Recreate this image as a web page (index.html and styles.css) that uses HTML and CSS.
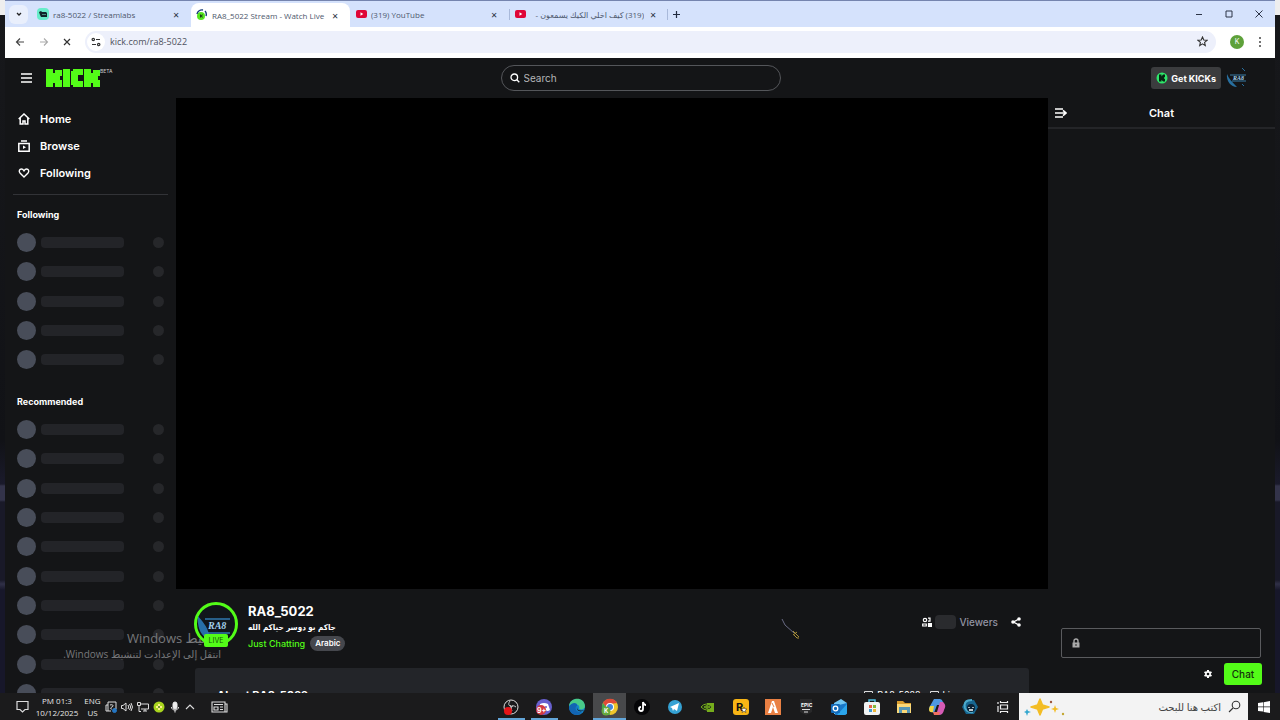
FILE: index.html
```html
<!DOCTYPE html>
<html lang="en">
<head>
    <meta charset="UTF-8">
    <meta name="viewport" content="width=device-width, initial-scale=1.0">
    <title>RA8_5022 Stream - Watch Live</title>
    <link rel="stylesheet" href="styles.css">
</head>
<body>
    <div class="desktop">
        <div class="window">
            <!-- browser tabs -->
            <div class="tabs">
                <button class="tab-menu" aria-label="Search tabs"><svg width="8" height="8" viewBox="0 0 8 8" fill="none" stroke="#222" stroke-width="1.3"><path d="M2 3l2 2 2-2"/></svg></button>
                <div class="tab">
                    <svg width="12" height="12" viewBox="0 0 12 12"><rect width="12" height="12" rx="4" fill="#67edc9"/><path d="M2 4l2-1 1 1h4l1 1v4H4L3 7z" fill="#10282b"/><path d="M6 6v1M8 6v1" stroke="#80f5d2"/></svg>
                    <span class="tab-title">ra8-5022 / Streamlabs</span>
                    <button class="close" aria-label="Close tab">✕</button>
                </div>
                <div class="tab active">
                    <svg width="12" height="12" viewBox="0 0 12 12"><circle cx="5" cy="7" r="4" fill="#55e51f"/><path d="M1 5a5 5 0 0 1 6-4M9 2a5 5 0 0 1 1 5" fill="none" stroke="#173c77" stroke-width="1.4"/><path d="M4 5.500h1v1l1-1h1L6 7l1 1.500H6l-1-1v1H4z" fill="#173d16"/></svg>
                    <span class="tab-title">RA8_5022 Stream - Watch Live</span>
                    <button class="close" aria-label="Close tab">✕</button>
                </div>
                <div class="tab">
                    <svg width="12" height="12" viewBox="0 0 12 12"><rect x="1" y="2" width="11" height="8" rx="2" fill="#df0638"/><path d="M5.500 4.300v3.400L8.300 6z" fill="#fff"/></svg>
                    <span class="tab-title">(319) YouTube</span>
                    <button class="close" aria-label="Close tab">✕</button>
                </div>
                <div class="tab ruled">
                    <svg width="12" height="12" viewBox="0 0 12 12"><rect x="1" y="2" width="11" height="8" rx="2" fill="#df0638"/><path d="M5.500 4.300v3.400L8.300 6z" fill="#fff"/></svg>
                    <span class="tab-title" dir="rtl">(319) كيف اخلي الكيك يسمعون -</span>
                    <button class="close" aria-label="Close tab">✕</button>
                </div>
                <button class="new-tab" aria-label="New tab"><svg width="9" height="9" viewBox="0 0 9 9" stroke="#222b40" stroke-width="1.200"><path d="M4.500 1v7M1 4.500h7"/></svg></button>
                <div class="window-buttons">
                    <button aria-label="Minimize"><svg width="8" height="8" viewBox="0 0 8 8" stroke="#2c3447"><path d="M1 4.500h6"/></svg></button>
                    <button aria-label="Maximize"><svg width="8" height="8" viewBox="0 0 8 8" fill="none" stroke="#2c3447"><path d="M1 1h6v6H1z"/></svg></button>
                    <button aria-label="Close"><svg width="8" height="8" viewBox="0 0 8 8" stroke="#2c3447"><path d="M.5.500l7 7M7.500.500l-7 7"/></svg></button>
                </div>
            </div>

            <!-- address bar -->
            <div class="toolbar">
                <button aria-label="Back"><svg width="10" height="10" viewBox="0 0 10 10" fill="none" stroke="#444" stroke-width="1.200"><path d="M9 5H1.500M5 1.500L1.500 5 5 8.500"/></svg></button>
                <button aria-label="Forward"><svg width="10" height="10" viewBox="0 0 10 10" fill="none" stroke="#aaa" stroke-width="1.100"><path d="M1 5h7.500M5 1.500L8.500 5 5 8.500"/></svg></button>
                <button aria-label="Stop"><svg width="8" height="8" viewBox="0 0 8 8" stroke="#333" stroke-width="1.200"><path d="M1 1l6 6M7 1L1 7"/></svg></button>
                <div class="address">
                    <span class="site-info"><svg width="10" height="10" viewBox="0 0 10 10" fill="none" stroke="#333" stroke-width="1.200"><path d="M5 2.500h4M1 7.500h4"/><circle cx="2.300" cy="2.500" r="1.200"/><circle cx="7.700" cy="7.500" r="1.200"/></svg></span>
                    <input type="text" aria-label="Address" value="kick.com/ra8-5022">
                    <button aria-label="Bookmark"><svg width="11" height="11" viewBox="0 0 11 11" fill="none" stroke="#333" stroke-width="1.100"><path d="M5.500 1l1.300 3 3.200.3-2.400 2.100.7 3.200-2.800-1.700-2.800 1.700.7-3.200L1 4.300 4.200 4z"/></svg></button>
                </div>
                <button class="profile" aria-label="Profile">K</button>
                <button aria-label="Menu"><svg width="4" height="12" viewBox="0 0 4 12" fill="#444"><circle cx="2" cy="2" r="1"/><circle cx="2" cy="6" r="1"/><circle cx="2" cy="10" r="1"/></svg></button>
            </div>

            <header class="site-header">
                <div class="brand">
                    <button aria-label="Toggle sidebar"><svg width="11" height="10" viewBox="0 0 11 10" stroke="#fff" stroke-width="1.300"><path d="M0 1h11M0 5h11M0 9h11"/></svg></button>
                    <a class="logo" href="#" aria-label="Kick">
                        <svg width="54" height="18" viewBox="0 0 54 18" fill="#53fc18"><path d="M0 0h7v4h2V1h7v6h-2v4h2v7H9v-4H7v4H0zM17 0h7v18h-7zM25 2h2V0h10v6h-5v6h5v6H27v-2h-2zM38 0h7v4h2V1h7v6h-2v4h2v7h-7v-4h-2v4h-7z"/></svg>
                        <span>BETA</span>
                    </a>
                </div>
                <label class="search">
                    <svg width="10" height="10" viewBox="0 0 10 10" fill="none" stroke="#fff" stroke-width="1.300"><circle cx="4.300" cy="4.300" r="3.300"/><path d="M6.800 6.800L9.300 9.300"/></svg>
                    <input type="text" aria-label="Search" placeholder="Search">
                </label>
                <div class="account">
                    <button class="kicks"><svg width="12" height="12" viewBox="0 0 12 12"><circle cx="6" cy="6" r="5.500" fill="#2ee66b"/><path d="M3 2.500h2.500v2L7 2.500h2v2.200L7.800 6 9 7.300v2.200H7L5.500 7.700v1.800H3z" fill="#082313"/></svg>Get KICKs</button>
                    <a href="#" aria-label="Account"><svg width="22" height="22" viewBox="0 0 22 22"><path d="M1 7c2 5 5 8 10 13C5 20 0 14 1 7z" fill="#286f9f"/><path d="M4 8h16M6 14h14" stroke="#397da7"/><path d="M16 1l3 3M16 17l2 2" stroke="#286f9f"/><text class="mark" x="7" y="13" font-size="6">RA8</text></svg></a>
                </div>
            </header>

            <div class="site">
                <nav class="sidebar">
                    <ul class="menu">
                        <li><a href="#"><svg width="12" height="12" viewBox="0 0 12 12" fill="none" stroke="#fff" stroke-width="1.500"><path d="M.7 6L6 1l5.300 5M2.200 5v6H5V8h2v3h2.800V5"/></svg>Home</a></li>
                        <li><a href="#"><svg width="12" height="12" viewBox="0 0 12 12" fill="none" stroke="#fff" stroke-width="1.500"><path d="M3 1h6M.8 3.500h10.400v7.700H.8z"/><path d="M5 5.500v3.500l3-1.700z" fill="#fff" stroke="none"/></svg>Browse</a></li>
                        <li><a href="#"><svg width="12" height="12" viewBox="0 0 12 12" fill="none" stroke="#fff" stroke-width="1.400"><path d="M6 10L2 6C.5 4.300 1.500 2 3.400 2 4.800 2 5.500 3 6 3.800 6.500 3 7.200 2 8.600 2c1.900 0 2.900 2.300 1.400 4z"/></svg>Following</a></li>
                    </ul>
                    <h2>Following</h2>
                    <div class="channels short">
                        <div class="channel"><i></i><b></b><s></s></div>
                        <div class="channel"><i></i><b></b><s></s></div>
                        <div class="channel"><i></i><b></b><s></s></div>
                        <div class="channel"><i></i><b></b><s></s></div>
                        <div class="channel"><i></i><b></b><s></s></div>
                    </div>
                    <h2>Recommended</h2>
                    <div class="channels">
                        <div class="channel"><i></i><b></b><s></s></div>
                        <div class="channel"><i></i><b></b><s></s></div>
                        <div class="channel"><i></i><b></b><s></s></div>
                        <div class="channel"><i></i><b></b><s></s></div>
                        <div class="channel"><i></i><b></b><s></s></div>
                        <div class="channel"><i></i><b></b><s></s></div>
                        <div class="channel"><i></i><b></b><s></s></div>
                        <div class="channel"><i></i><b></b><s></s></div>
                        <div class="channel"><i></i><b></b><s></s></div>
                        <div class="channel"><i></i><b></b><s></s></div>
                    </div>
                </nav>

                <main class="stream">
                    <div class="player"></div>
                    <div class="info">
                        <div class="avatar">
                            <svg width="44" height="44" viewBox="0 0 44 44"><circle cx="22" cy="22" r="20.500" fill="#11161b" stroke="#53fc18" stroke-width="3"/><path d="M4 14c4 5 9 10 11 18l-3 4C6 32 3 24 4 14z" fill="#286fa8"/><path d="M11 17h25M13 31h23" stroke="#2f78ae" stroke-width="1.500"/><text class="mark" x="14" y="27" font-size="10">RA8</text></svg>
                            <span class="live">LIVE</span>
                        </div>
                        <div class="details">
                            <h1>RA8_5022</h1>
                            <p class="stream-title" dir="rtl">جاكم بو دوسر حياكم الله</p>
                            <div class="tags"><a href="#">Just Chatting</a><span class="tag">Arabic</span></div>
                        </div>
                        <div class="viewers">
                            <svg width="10" height="10" viewBox="0 0 10 10" fill="none" stroke="#fff" stroke-width="1.200"><circle cx="3" cy="3" r="1.700"/><path d="M.7 9V7h3.600v2zM6 1.200h2v3H6"/><path d="M6.500 6.500h3v3h-3z" fill="#fff"/></svg>
                            <span class="count"></span>
                            <span>Viewers</span>
                            <button aria-label="Share"><svg width="10" height="10" viewBox="0 0 10 10" fill="none" stroke="#fff" stroke-width="1.200"><path d="M8 2L2.500 5 8 8"/><g fill="#fff" stroke="none"><circle cx="8" cy="2" r="1.800"/><circle cx="2" cy="5" r="1.800"/><circle cx="8" cy="8" r="1.800"/></g></svg></button>
                        </div>
                    </div>
                    <section class="about">
                        <h2>About RA8_5022 <small>✓</small></h2>
                        <div class="links">
                            <svg width="9" height="9" viewBox="0 0 9 9" fill="none" stroke="#ddd"><path d="M.5.500h8v8h-8z"/></svg><span>RA8_5022</span>
                            <svg width="9" height="9" viewBox="0 0 9 9" fill="none" stroke="#ddd"><path d="M.5.500h8v8h-8z"/></svg><span>Live</span>
                        </div>
                    </section>
                </main>

                <aside class="chat">
                    <div class="chat-header">
                        <button aria-label="Collapse chat"><svg width="12" height="10" viewBox="0 0 12 10" fill="none" stroke="#fff" stroke-width="1.600"><path d="M0 1h8M0 5h10M0 9h8M8 2.300L11 5 8 7.700"/></svg></button>
                        <h2>Chat</h2>
                    </div>
                    <label class="message">
                        <svg width="8" height="10" viewBox="0 0 8 10"><path d="M2 5V3a2 2 0 0 1 4 0v2" fill="none" stroke="#aaa" stroke-width="1.400"/><path d="M.5 4.500h7v5h-7z" fill="#aaa"/><path d="M4 6v2" stroke="#222"/></svg>
                        <input type="text" aria-label="Message">
                    </label>
                    <div class="chat-actions">
                        <button aria-label="Chat settings"><svg width="10" height="10" viewBox="0 0 10 10"><path d="M5 1v8M1.500 3l7 4M8.500 3l-7 4" stroke="#fff" stroke-width="2"/><circle cx="5" cy="5" r="2.900" fill="#fff"/><circle cx="5" cy="5" r="1.300" fill="#141517"/></svg></button>
                        <button class="send">Chat</button>
                    </div>
                </aside>
            </div>
        </div>

        <!-- windows activation notice -->
        <div class="watermark" dir="rtl"><strong>تنشيط Windows</strong><span>انتقل إلى الإعدادت لتنشيط Windows.</span></div>
        <svg class="cursor" width="20" height="22" viewBox="0 0 20 22" fill="none"><path d="M1 1l3 6 9 8" stroke="#686a83"/><path d="M12 13l6 6M12 17l4-3M13 17l3 3h2" stroke="#a88f38"/></svg>

        <footer class="taskbar">
            <div class="tray">
                <svg class="notify" width="13" height="13" viewBox="0 0 13 13" fill="none" stroke="#ddd" stroke-width="1.200"><path d="M1 1.500h11v8H9L6.500 12 4 9.500H1z"/></svg>
                <div class="clock"><span>PM 01:3</span><span>10/12/2025</span></div>
                <div class="lang"><span>ENG</span><span>US</span></div>
                <svg width="12" height="12" viewBox="0 0 12 12" fill="none" stroke="#ddd"><path d="M3 10H1V4h2M9 8h2V1H3v9h3M5 4c3-1 4 1 2 2s-2 2 0 2"/><circle cx="9.500" cy="9.500" r="2" fill="#2476c2" stroke="#2476c2"/></svg>
                <svg width="12" height="12" viewBox="0 0 12 12" fill="none" stroke="#ddd"><path d="M.5 4.500H2L5 2v8L2 7.500H.5zM7 4q1.500 2 0 4M8.500 3q2.500 3 0 6M10 2q3 4 0 8"/></svg>
                <svg width="12" height="12" viewBox="0 0 12 12" fill="none" stroke="#ddd"><path d="M4 3h7.500v5H4M6 10h4M8 8v2M.5 1.500h3v3h-3zM2 4.500v6h2"/></svg>
                <svg width="12" height="12" viewBox="0 0 12 12"><circle cx="6" cy="6" r="5.500" fill="#a9d51e"/><path d="M6 3v6M3 6h6" stroke="#fff08a" stroke-width="2"/><circle cx="6" cy="6" r="1" fill="#3c781b"/></svg>
                <svg width="12" height="12" viewBox="0 0 12 12" fill="none" stroke="#eee"><rect x="4" y="1" width="4" height="7" rx="2" fill="#eee"/><path d="M2.500 6c0 4 7 4 7 0M6 9v2.500"/></svg>
                <svg class="chevron" width="10" height="10" viewBox="0 0 10 10" fill="none" stroke="#ddd" stroke-width="1.100"><path d="M1 7l4-4 4 4"/></svg>
                <svg class="news" width="17" height="12" viewBox="0 0 17 12" fill="none" stroke="#ddd" stroke-width="1.100"><path d="M1 1h13v10H1zM14 3h2v8h-2M3 3.500h9M9 6h3M9 8.500h3M3 6h4v3H3z"/></svg>
            </div>
            <div class="apps">
                <a class="open" href="#" aria-label="OBS"><svg width="18" height="18" viewBox="0 0 18 18"><circle cx="9" cy="9" r="7" fill="#18191b" stroke="#ddd"/><path d="M8 3c-3 4 0 6 3 5M14 9c-4-3-6 0-4 4M5 13c4 0 5-3 3-6" fill="none" stroke="#ccc"/><circle cx="6" cy="13" r="4" fill="#e51418"/></svg></a>
                <a class="open" href="#" aria-label="Discord"><svg width="18" height="18" viewBox="0 0 18 18"><circle cx="9" cy="9" r="8" fill="#6860ce"/><path d="M5 6q4-2 8 0l2 6q-3 2-4 0H8q-2 2-4 0z" fill="#fff"/><circle cx="11" cy="9" r="1" fill="#6860ce"/><circle cx="6" cy="12" r="5" fill="#d33941"/><text class="badge" x="2" y="15" font-size="7">9+</text></svg></a>
                <a href="#" aria-label="Edge"><svg width="18" height="18" viewBox="0 0 18 18"><circle cx="9" cy="9" r="8" fill="#1586cc"/><path d="M1 8C2-1 16-2 17 8c0 3-3 4-6 3 2-4-4-7-10-3z" fill="#48ca89"/><path d="M1 9c2-5 9-5 8-1-3 2-1 7 5 6-5 6-13 2-13-5z" fill="#1264b3"/><path d="M9 9c0 4 4 4 7 3-3 3-8 1-7-3z" fill="#16202a"/></svg></a>
                <a class="open current" href="#" aria-label="Chrome"><svg width="18" height="18" viewBox="0 0 18 18"><circle cx="9" cy="9" r="8" fill="#efc52b"/><path d="M2 5a8 8 0 0 1 14 0l-7 1-3 5z" fill="#df4939"/><path d="M2 5l5 7 2 5C2 17-1 10 2 5z" fill="#3fa652"/><circle cx="9" cy="9" r="4" fill="#fff"/><circle cx="9" cy="9" r="3" fill="#4285de"/><circle cx="5" cy="13" r="4.500" fill="#65aa3d"/><text class="badge" x="3" y="15" font-size="6">K</text></svg></a>
                <a href="#" aria-label="TikTok"><svg width="18" height="18" viewBox="0 0 18 18"><circle cx="9" cy="9" r="8" fill="#050507"/><path d="M10 4v7a2 2 0 1 1-2-2M10 4q1 3 3 3" fill="none" stroke="#fff" stroke-width="1.800"/></svg></a>
                <a href="#" aria-label="Telegram"><svg width="18" height="18" viewBox="0 0 18 18"><circle cx="9" cy="9" r="7" fill="#35a2d4"/><path d="M4 9l9-4-2 8-3-2-1 2-1-3z" fill="#fff"/></svg></a>
                <a href="#" aria-label="NVIDIA"><svg width="18" height="18" viewBox="0 0 18 18"><path d="M8 5h7v9H8z" fill="#76ad1c"/><path d="M2 9q5-6 11 0-5 6-11 0zM5 9q3-3 6 0-3 3-6 0z" fill="#1d2718" stroke="#76ad1c"/><circle cx="8" cy="9" r="1" fill="#76ad1c"/></svg></a>
                <a href="#" aria-label="Rockstar"><svg width="18" height="18" viewBox="0 0 18 18"><rect x="1" y="1" width="16" height="16" rx="3" fill="#f8b515"/><text class="rockstar" x="4" y="13" font-size="11">R</text><path d="M12 9l.8 2h2.200l-1.700 1.500.7 2-2-1.200-2 1.200.7-2L9 11h2.200z" fill="#fff" stroke="#222" stroke-width=".5"/></svg></a>
                <a href="#" aria-label="FiveM"><svg width="18" height="18" viewBox="0 0 18 18"><path d="M1 1h16v16H1z" fill="#e98043"/><path d="M4 15L8 3h2l4 12h-3L9 9l-2 6z" fill="#fff"/><path d="M8 5l2 4" stroke="#e98043"/></svg></a>
                <a href="#" aria-label="Epic Games"><svg width="18" height="18" viewBox="0 0 18 18"><path d="M3 1h12v13l-6 3-6-3z" fill="#29292a"/><text class="badge" x="4" y="9" font-size="5">EPIC</text><path d="M5 11.500h8M7 14h4" stroke="#ddd"/></svg></a>
                <a href="#" aria-label="Outlook"><svg width="18" height="18" viewBox="0 0 18 18"><path d="M4 5l7-4 6 4v11H4z" fill="#71c7f3"/><path d="M5 8l12-3v9q0 3-3 3H5z" fill="#1978c9"/><path d="M17 6v8q0 3-3 3H7z" fill="#2ba6ec"/><rect x="1" y="6" width="9" height="9" rx="1" fill="#126bb9"/><circle cx="5.500" cy="10.500" r="2.300" fill="none" stroke="#fff" stroke-width="1.300"/></svg></a>
                <a href="#" aria-label="Store"><svg width="18" height="18" viewBox="0 0 18 18"><path d="M6 5V2h6v3" fill="none" stroke="#4fbfe1" stroke-width="1.500"/><rect x="1" y="4" width="16" height="13" rx="2" fill="#f1f3f3"/><path d="M6 7h3v3H6z" fill="#e36149"/><path d="M10 7h3v3h-3z" fill="#81b93c"/><path d="M6 11h3v3H6z" fill="#409bd1"/><path d="M10 11h3v3h-3z" fill="#edb638"/></svg></a>
                <a href="#" aria-label="File Explorer"><svg width="18" height="18" viewBox="0 0 18 18"><path d="M2 3h6l2 2h6v10H2z" fill="#d99d2e"/><path d="M2 6h14v9H2z" fill="#fbd878"/><path d="M4 9h11v6h-3v-3H7v3H4z" fill="#5696b5"/></svg></a>
                <a href="#" aria-label="Copilot"><svg width="18" height="18" viewBox="0 0 18 18"><path d="M6 1h6q2 0 3 3l1 3H9L6 15 2 13Q0 11 2 8z" fill="#4f98e3"/><path d="M6 8H2l-1 3q0 4 4 3z" fill="#f0d445"/><path d="M12 4h3q4 3 1 8-1 5-5 5H6q2 0 3-3z" fill="#d65bb5"/><path d="M5 14h7l-1 3H6z" fill="#ef7060"/></svg></a>
                <a href="#" aria-label="Voice app"><svg width="18" height="18" viewBox="0 0 18 18"><path d="M5 2h8l4 7-4 7H5L1 9z" fill="#176690"/><path d="M11 2Q2 2 4 10q2 5 8 4" fill="none" stroke="#4ba9ca" stroke-width="2"/><circle cx="10" cy="10" r="4" fill="#0b2437"/><path d="M8 9v1M12 9v1M8 12h4" stroke="#fff" stroke-width="1.300"/></svg></a>
                <a href="#" aria-label="Task view"><svg width="14" height="14" viewBox="0 0 14 14" fill="none" stroke="#eee" stroke-width="1.200"><path d="M4.500 5h7v4h-7zM4 2.500h8M4 11.500h8M2 2v2M2 6v6M4.500 1v2M11.500 1v2M4.500 11v2M11.500 11v2"/></svg></a>
            </div>
            <label class="task-search" dir="rtl">
                <svg width="13" height="13" viewBox="0 0 13 13" fill="none" stroke="#333" stroke-width="1.100"><circle cx="8" cy="5" r="3.800"/><path d="M5 8l-4 4"/></svg>
                <input type="text" aria-label="بحث" placeholder="اكتب هنا للبحث">
                <svg width="42" height="20" viewBox="0 0 42 20"><path d="M17 2l2.500 6L26 10l-6.500 2L17 18l-2.500-6L8 10l6.500-2z" fill="#f3bd25" stroke="#f3bd25" stroke-width="1.500" stroke-linejoin="round"/><path d="M32 8l1 3 3 1-3 1-1 3-1-3-3-1 3-1z" fill="#f3bd25"/><path d="M4 12l1 2 3 1-3 1-1 3-1-3-2-1 2-1z" fill="#35a8cf"/><circle cx="28" cy="5" r="1.200" fill="#9d563c"/><circle cx="40" cy="17" r="1.200" fill="#c3a732"/></svg>
            </label>
            <button class="start" aria-label="Start"><svg width="12" height="12" viewBox="0 0 12 12" fill="#fff"><path d="M0 2l5-.7v4.300H0zM5.600 1.200L12 0v5.600H5.600zM0 6.200h5v4.300L0 10zM5.600 6.200H12V12l-6.400-1.100z"/></svg></button>
        </footer>
    </div>
</body>
</html>
```

FILE: styles.css
```css
* {
    box-sizing: border-box;
}
body {
    margin: 0;
    font-family: Inter, "DejaVu Sans", sans-serif;
    font-size: 11px;
    color: #fff;
    background-color: #131417;
}
button {
    padding: 0;
    border: 0;
    background: none;
    color: inherit;
    font: inherit;
    display: flex;
    align-items: center;
    justify-content: center;
}
input {
    min-width: 0;
    flex: 1;
    padding: 0;
    border: 0;
    outline: 0;
    background: none;
    color: inherit;
    font: inherit;
}
a {
    color: inherit;
    text-decoration: none;
}
h1, h2, p, ul {
    margin: 0;
    padding: 0;
}
svg {
    flex: none;
    display: block;
}
.desktop {
    position: relative;
    height: 100vh;
    display: flex;
    flex-direction: column;
    overflow: hidden;
    background: linear-gradient(#eee 15px, #17181b 15px, #111216 440px, #1a1a2b 484px, #33334a 486px, #33334a 500px, #191928 502px, #191928 580px, #303047 584px, #17172a 590px);
}
.window {
    flex: 1;
    min-height: 0;
    margin: 0 5px;
    display: flex;
    flex-direction: column;
    background-color: #141517;
}

/* browser */
.tabs {
    height: 27px;
    flex: none;
    display: flex;
    align-items: center;
    border-top: 1px solid #7584ae;
    background-color: #d5e2fc;
    color: #4d586c;
    font-family: "Open Sans", "DejaVu Sans", sans-serif;
    font-size: 8px;
}
.tab-menu {
    width: 19px;
    height: 19px;
    margin: 0 4px;
    border-radius: 6px;
    background-color: #e9effc;
}
.tab {
    width: 159px;
    height: 100%;
    padding: 0 10px 0 5px;
    display: flex;
    align-items: center;
    gap: 4px;
}
.tab.active {
    height: 24px;
    align-self: flex-end;
    border-radius: 8px 8px 0 0;
    background-color: #fff;
}
.tab.ruled {
    background: linear-gradient(#a9b9da, #a9b9da) no-repeat left center / 1px 11px, linear-gradient(#a9b9da, #a9b9da) no-repeat right center / 1px 11px;
}
.tab-title {
    flex: 1;
    overflow: hidden;
    white-space: nowrap;
}
.close {
    width: 10px;
    color: #2c3447;
}
.new-tab {
    width: 16px;
}
.window-buttons {
    margin-left: auto;
    padding-right: 12px;
    display: flex;
    gap: 22px;
}
.toolbar {
    height: 31px;
    flex: none;
    display: flex;
    align-items: center;
    gap: 14px;
    padding: 0 13px 2px 10px;
    background-color: #fff;
}
.address {
    flex: 1;
    height: 22px;
    padding: 0 8px 0 2px;
    display: flex;
    align-items: center;
    gap: 5px;
    border-radius: 11px;
    background-color: #edf0fb;
    color: #4f5360;
    font-family: "Open Sans", sans-serif;
    font-size: 9px;
}
.site-info {
    width: 18px;
    height: 18px;
    display: flex;
    align-items: center;
    justify-content: center;
    border-radius: 9px;
    background-color: #fff;
}
.profile {
    width: 14px;
    height: 14px;
    border-radius: 7px;
    background-color: #5ea13a;
    font-size: 7px;
}

/* kick header */
.site-header {
    height: 40px;
    flex: none;
    display: grid;
    grid-template-columns: 1fr 280px 1fr;
    align-items: center;
    padding: 0 27px 0 16px;
}
.brand, .logo, .account {
    display: flex;
    align-items: center;
}
.brand {
    gap: 14px;
}
.logo {
    align-items: flex-start;
    color: #ccc;
    font-size: 5px;
    line-height: 5px;
}
.search {
    height: 26px;
    display: flex;
    align-items: center;
    gap: 4px;
    margin-left: 6px;
    width: 280px;
    padding: 0 8px;
    border: 1px solid #54565a;
    border-radius: 13px;
    font-size: 10px;
}
.search input::placeholder {
    color: #b5b6b9;
    opacity: 1;
}
.account {
    justify-content: flex-end;
    gap: 5px;
}
.kicks {
    height: 22px;
    padding: 0 5px;
    gap: 3px;
    border-radius: 3px;
    background-color: #3b3c3e;
    font-size: 9px;
    font-weight: 700;
}
.mark {
    fill: #a3d0ed;
    font-family: "Liberation Serif", serif;
    font-style: italic;
    font-weight: bold;
}

/* page columns */
.site {
    flex: 1;
    min-height: 0;
    display: grid;
    grid-template-columns: 171px 1fr 227px;
    grid-template-rows: 100%;
}
.sidebar {
    padding: 7px 8px 0 12px;
    overflow: hidden;
}
.menu {
    list-style: none;
    padding-bottom: 8px;
    margin-left: -4px;
    border-bottom: 1px solid #323337;
}
.menu a {
    height: 27px;
    padding-left: 5px;
    display: flex;
    align-items: center;
    gap: 10px;
    font-weight: 600;
}
.sidebar h2 {
    margin: 13px 0 11px;
    font-size: 9px;
    line-height: 14px;
    font-weight: 700;
}
.channels {
    height: 283px;
    display: flex;
    flex-direction: column;
    justify-content: space-between;
    padding-right: 4px;
}
.channels.short {
    height: 136px;
    margin-bottom: 26px;
}
.channel {
    display: flex;
    align-items: center;
}
.channel i {
    width: 19px;
    height: 19px;
    border-radius: 50%;
    background-color: #484d59;
}
.channel b {
    width: 83px;
    height: 11px;
    margin-left: 5px;
    border-radius: 4px;
    background-color: #232428;
}
.channel s {
    width: 11px;
    height: 11px;
    margin-left: auto;
    border-radius: 50%;
    background-color: #26272a;
}
.stream {
    min-height: 0;
    display: flex;
    flex-direction: column;
    overflow: hidden;
}
.player {
    flex: 1;
    background-color: #000;
}
.info {
    height: 79px;
    flex: none;
    display: flex;
    padding: 13px 27px 0 18px;
    gap: 10px;
}
.avatar {
    position: relative;
    z-index: 2;
    height: 44px;
}
.live {
    position: absolute;
    left: 10px;
    bottom: -1px;
    width: 24px;
    height: 13px;
    border-radius: 2px;
    background-color: #53fc18;
    color: #16540b;
    font-size: 7px;
    line-height: 13px;
    text-align: center;
}
.details {
    flex: 1;
}
.details h1 {
    font-size: 13px;
    line-height: 18px;
    font-weight: 700;
}
.stream-title {
    width: fit-content;
    font-family: "DejaVu Sans Condensed", "DejaVu Sans", sans-serif;
    font-size: 8px;
    font-weight: bold;
    line-height: 16px;
}
.tags {
    display: flex;
    align-items: center;
    gap: 5px;
    color: #53fc18;
    font-size: 9px;
    font-weight: 500;
}
.tag {
    padding: 0 5px;
    border-radius: 8px;
    background-color: #45474d;
    color: #fff;
    font-size: 8px;
    line-height: 15px;
    font-weight: 600;
}
.viewers {
    height: 14px;
    margin-top: 13px;
    display: flex;
    align-items: center;
    gap: 3px;
    color: #9293a2;
    font-size: 10px;
    font-weight: 500;
}
.viewers button {
    margin-left: 10px;
}
.count {
    width: 21px;
    height: 14px;
    border-radius: 4px;
    background-color: #2a2b2e;
}
.about {
    height: 25px;
    flex: none;
    margin: 0 19px;
    padding: 20px 19px 0 22px;
    display: flex;
    justify-content: space-between;
    overflow: hidden;
    border-radius: 3px 3px 0 0;
    background-color: #232529;
}
.about h2 {
    font-size: 11px;
    line-height: 14px;
    font-weight: 700;
}
.about small {
    font-size: 8px;
}
.links {
    display: flex;
    gap: 4px;
    padding-right: 50px;
    font-size: 9px;
    line-height: 13px;
}
.links svg {
    margin: 3px 0 0 5px;
}

/* chat */
.chat {
    display: flex;
    flex-direction: column;
}
.chat-header {
    height: 31px;
    display: grid;
    grid-template-columns: 1fr auto 1fr;
    align-items: center;
    padding: 0 7px;
    border-bottom: 2px solid #242528;
}
.chat-header button {
    justify-content: flex-start;
}
.chat-header h2 {
    font-size: 11px;
    font-weight: 600;
}
.message {
    height: 30px;
    margin: auto 14px 5px 13px;
    padding: 0 10px;
    display: flex;
    align-items: center;
    gap: 8px;
    border: 1px solid #5a5b5e;
    border-radius: 2px;
}
.chat-actions {
    display: flex;
    justify-content: flex-end;
    gap: 11px;
    padding: 0 13px 8px 0;
}
.send {
    width: 38px;
    height: 22px;
    border-radius: 3px;
    background-color: #53fc18;
    color: #14310c;
    font-size: 10px;
    font-weight: 500;
}

/* over the desktop */
.watermark {
    position: absolute;
    top: 629px;
    left: 64px;
    width: 157px;
    display: flex;
    flex-direction: column;
    color: #77787b;
    font-family: "Open Sans", "DejaVu Sans", sans-serif;
    font-size: 10px;
    line-height: 14px;
    white-space: nowrap;
}
.watermark strong {
    font-size: 13px;
    line-height: 18px;
    font-weight: normal;
}
.cursor {
    position: absolute;
    top: 618px;
    left: 781px;
}

/* taskbar */
.taskbar {
    height: 27px;
    flex: none;
    display: flex;
    background-color: #1b1b1c;
    font-family: "Open Sans", "DejaVu Sans", sans-serif;
}
.tray {
    display: flex;
    align-items: center;
    gap: 4px;
    padding-left: 16px;
    color: #e5e5e5;
    font-size: 8px;
    line-height: 12px;
}
.clock, .lang {
    display: flex;
    flex-direction: column;
    align-items: center;
}
.clock {
    width: 46px;
}
.lang {
    width: 17px;
}
.notify {
    margin-right: 1px;
}
.news {
    margin-left: 12px;
}
.apps {
    width: 524px;
    margin-left: auto;
    display: grid;
    grid-template-columns: repeat(16, 1fr);
}
.apps a {
    display: flex;
    align-items: center;
    justify-content: center;
}
.apps .open {
    border-bottom: 2px solid #62a5d8;
    padding-top: 2px;
    margin: 0 3px;
}
.apps .current {
    margin: 0;
    background-color: #48494b;
}
.badge {
    fill: #fff;
    font-family: Inter, sans-serif;
    font-weight: bold;
}
.rockstar {
    fill: #111;
    font-family: Inter, sans-serif;
    font-weight: bold;
}
.task-search {
    width: 229px;
    padding: 0 7px 0 4px;
    display: flex;
    align-items: center;
    gap: 7px;
    background-color: #f3f3f3;
    color: #333;
    font-size: 10px;
}
.task-search input::placeholder {
    color: #444;
    opacity: 1;
}
.start {
    width: 32px;
}
```
